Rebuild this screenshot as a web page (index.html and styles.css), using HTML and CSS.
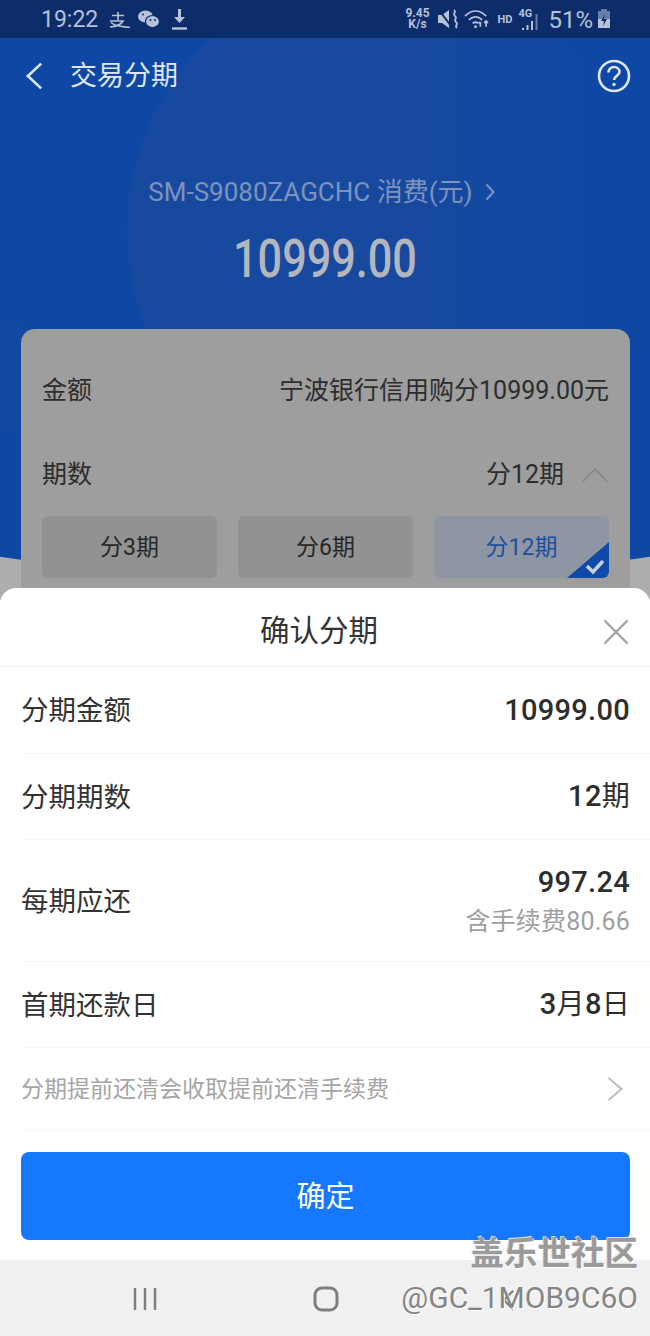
FILE: index.html
```html
<!DOCTYPE html>
<html lang="zh-CN">
<head>
<meta charset="utf-8">
<title>交易分期</title>
<link rel="stylesheet" href="styles.css">
</head>
<body>
<div class="page">
  <div class="behind">
    <div class="blue"><div class="disc"></div><div class="disc-small"></div></div>
    <div class="status">
      <div class="status-left">
        <span class="time">19:22</span>
        <svg class="i-ali" viewBox="0 0 23 18"><path d="M4 5.500h12M10 2v8M2 11h13C13 14.500 8 16.500 2 17M3 12.500C7 16.500 14 16.500 22 17.500"/></svg>
        <svg class="i-wx" viewBox="0 0 22 18"><ellipse cx="7.500" cy="6.500" rx="7.500" ry="6"/><ellipse class="wx2" cx="14.500" cy="11.500" rx="7" ry="6"/><circle class="eye" cx="12.500" cy="10" r="1"/><circle class="eye" cx="17" cy="10" r="1"/><circle class="eye" cx="5" cy="4.500" r="1"/></svg>
        <svg class="i-dl" viewBox="0 0 17 21"><path class="fill" d="M7 0h3v8h4l-5.500 6L3 8h4z"/><path d="M1 19.500h15"/></svg>
      </div>
      <div class="status-right">
        <span class="speed">9.45<br>K/s</span>
        <svg class="i-mute" viewBox="0 0 20 20"><path class="fill" d="M0 6h4l7-5v18l-7-5H0z"/><path class="cut" d="M1 1l12 16"/><path d="M16 1c3 2-2 4 1 6s-2 4 1 6-2 4 1 6"/></svg>
        <svg class="i-wifi" viewBox="0 0 26 20"><path d="M1 7c7-7 15-7 22 0M5 11c4.500-4 9.500-4 14 0M9 14.500c2-1.500 4-1.500 6 0"/><circle class="fill" cx="12" cy="18" r="1.500"/><path d="M17 13v5M15.500 14.500L17 13M23 18v-6M21 14l2-2 2 2"/></svg>
        <span class="hd">HD</span>
        <span class="net"><span class="net-label">4G</span>
          <svg class="i-sig" viewBox="0 0 18 19"><path d="M2 19v-2M6.500 19v-5M11 19v-9"/><path d="M15.500 19V3" class="dim"/></svg>
        </span>
        <span class="batt-text">51%</span>
        <svg class="i-batt" viewBox="0 0 14 20"><rect class="fill dim-fill" x="4" y="0" width="6" height="2"/><rect class="fill dim-fill" x="1" y="2" width="12" height="8"/><rect class="fill" x="1" y="10" width="12" height="9"/><path class="bolt" d="M8 5l-4 7h3l-1 5 4-7H7z"/></svg>
      </div>
    </div>
    <header class="appbar">
      <svg class="i-back" viewBox="0 0 20 30"><path d="M17 2L3 15l14 13"/></svg>
      <h1 class="appbar-title">交易分期</h1>
      <svg class="i-help" viewBox="0 0 34 34"><circle cx="17" cy="17" r="15"/><path d="M11.500 13.500c0-3.500 2.500-5.500 5.500-5.500s5.500 2 5.500 5c0 3.800-5.500 4-5.500 8"/><circle class="fill" cx="17" cy="25.500" r="1.700"/></svg>
    </header>
    <section class="hero">
      <div class="hero-sub"><span>SM-S9080ZAGCHC 消费(元)</span>
        <svg class="i-gt" viewBox="0 0 10 18"><path d="M1.500 1.500L8.500 9l-7 7.500"/></svg></div>
      <div class="hero-amount">10999.00</div>
    </section>
    <section class="card">
      <div class="card-row"><span>金额</span><span>宁波银行信用购分10999.00元</span></div>
      <div class="card-row"><span>期数</span>
        <span class="card-val"><span>分12期</span><svg class="i-up" viewBox="0 0 28 16"><path d="M1.500 15L14 2l12.500 13"/></svg></span></div>
      <div class="opts">
        <div class="opt">分3期</div>
        <div class="opt">分6期</div>
        <div class="opt opt-on">分12期<svg class="i-corner" viewBox="0 0 42 36"><path class="corner" d="M42 0v30a6 6 0 0 1-6 6H0z"/><path class="tick" d="M20 24l6 6 10-11"/></svg></div>
      </div>
    </section>
  </div>

  <section class="sheet">
    <div class="sheet-head">
      <h2 class="sheet-title">确认分期</h2>
      <svg class="i-x" viewBox="0 0 28 28"><path d="M1.500 1.500l25 25M26.500 1.500l-25 25"/></svg>
    </div>
    <div class="row"><span class="label">分期金额</span><b class="val">10999.00</b></div>
    <div class="row"><span class="label">分期期数</span><b class="val">12<span class="reg">期</span></b></div>
    <div class="row row-tall"><span class="label">每期应还</span>
      <div class="val-stack"><b class="val">997.24</b><span class="fee">含手续费80.66</span></div></div>
    <div class="row"><span class="label">首期还款日</span><b class="val">3<span class="reg">月</span>8<span class="reg">日</span></b></div>
    <div class="row row-note"><span class="label">分期提前还清会收取提前还清手续费</span>
      <svg class="i-chev" viewBox="0 0 18 28"><path d="M2 2l14 12L2 26"/></svg></div>
    <div class="action"><button class="confirm">确定</button></div>
  </section>

  <nav class="navbar">
    <svg class="i-recent" viewBox="0 0 24 24"><path d="M2 1v22M12 1v22M22 1v22"/></svg>
    <svg class="i-home" viewBox="0 0 26 26"><rect x="2" y="2" width="22" height="22" rx="7"/></svg>
    <svg class="i-nav-back" viewBox="0 0 14 24"><path d="M12 2L2 12l10 10"/></svg>
  </nav>
  <div class="mark"><div class="mark-a">盖乐世社区</div><div class="mark-b">@GC_1MOB9C6O</div></div>
</div>
</body>
</html>
```
FILE: styles.css
```css
* { box-sizing: border-box; margin: 0; padding: 0; }
html, body { width: 650px; height: 1336px; overflow: hidden; }
body { font-family: Roboto, "Noto Sans CJK SC", sans-serif; color: #2f2f2f; background: #fff; }
svg { display: block; fill: none; stroke: currentColor; flex: none; }
svg .fill { fill: currentColor; stroke: none; }

.page { position: relative; width: 650px; height: 1336px; display: flex; flex-direction: column; }

.behind { position: relative; height: 600px; flex: none; background: #adadad; overflow: hidden; }
.blue { position: absolute; left: -275px; top: 0; width: 1200px; height: 579px; border-radius: 0 0 50% 50% / 0 0 140px 140px; background: #0f47a5; overflow: hidden; }
.disc { position: absolute; left: 402px; top: -31px; width: 522px; height: 522px; border-radius: 50%; background: linear-gradient(90deg, #174a9f 55%, #0f47a5 92%); }
.disc-small { position: absolute; left: 205px; top: 315px; width: 120px; height: 120px; border-radius: 50%; background: #12489f; }

.status { position: relative; height: 38px; background: #0c2c6a; color: #b6c2d8; display: flex; justify-content: space-between; align-items: center; padding: 0 39px 0 41px; }
.status-left, .status-right { display: flex; align-items: center; }
.time { font-size: 23px; margin-right: 10px; line-height: 38px; padding-top: 2px; }
.i-ali { width: 23px; height: 18px; stroke-width: 1.700; margin-right: 7px; }
.i-wx { width: 22px; height: 18px; fill: currentColor; stroke: none; margin-right: 11px; }
.i-wx .wx2 { stroke: #0c2c6a; stroke-width: 1.200; }
.i-wx .eye { fill: #0c2c6a; }
.i-dl { width: 17px; height: 21px; stroke-width: 2.400; }
.speed { width: 24px; font-size: 12px; font-weight: 700; line-height: 11px; text-align: center; margin-right: 9px; white-space: nowrap; }
.i-mute { width: 20px; height: 20px; stroke-width: 1.800; margin-right: 6px; }
.i-mute .cut { stroke: #0c2c6a; stroke-width: 2; }
.i-wifi { width: 25px; height: 20px; stroke-width: 1.800; margin-right: 8px; }
.hd { width: 16px; font-size: 11px; font-weight: 700; margin-right: 5px; white-space: nowrap; }
.net { position: relative; display: flex; width: 21px; height: 22px; margin-right: 9px; }
.net-label { position: absolute; left: 0; top: 0; font-size: 11px; font-weight: 700; line-height: 11px; }
.i-sig { position: absolute; right: 0; bottom: 0; width: 18px; height: 19px; stroke-width: 2; }
.i-sig .dim { opacity: .55; }
.batt-text { font-size: 24px; margin-right: 4px; line-height: 38px; padding-top: 2px; }
.i-batt { width: 14px; height: 20px; }
.i-batt .dim-fill { opacity: .55; }
.i-batt .bolt { fill: #0c2c6a; stroke: none; }

.appbar { position: relative; height: 76px; display: flex; align-items: center; padding: 0 20px 0 25px; color: #dfe7f3; }
.i-back { width: 19px; height: 30px; stroke-width: 2.800; margin-right: 26px; }
.appbar-title { flex: 1; font-size: 27px; font-weight: 400; line-height: 36px; }
.i-help { width: 34px; height: 34px; stroke-width: 2.600; margin-right: -1px; }

.hero { position: relative; padding-top: 60px; height: 215px; text-align: center; color: #7d93bd; }
.hero-sub { display: flex; justify-content: center; align-items: center; gap: 12px; font-size: 26px; line-height: 36px; padding-right: 7px; }
.i-gt { width: 10px; height: 18px; stroke-width: 2; }
.hero-amount { margin-top: 20px; font-size: 53px; font-weight: 500; line-height: 58px; color: #b3b6bd; transform: scaleX(.815); }

.card { position: relative; margin: 0 20px 0 21px; height: 300px; padding: 30px 21px 0; background: #9e9e9e; border-radius: 14px; color: #2c2c2c; font-size: 25px; }
.card-row { height: 62px; display: flex; justify-content: space-between; align-items: center; line-height: 36px; padding-top: 2px; }
.card-row + .card-row { margin-top: 22px; }
.card-val { display: flex; align-items: center; gap: 17px; }
.i-up { width: 28px; height: 16px; stroke-width: 1.600; color: #868686; }
.opts { display: grid; grid-template-columns: repeat(3, 175px); justify-content: space-between; margin-top: 11px; }
.opt { position: relative; height: 62px; border-radius: 6px; background: #929292; display: flex; align-items: center; justify-content: center; font-size: 23px; color: #262626; padding-bottom: 4px; }
.opt-on { background: #8f96a3; color: #1c4f9f; overflow: hidden; }
.i-corner { position: absolute; right: 0; bottom: 0; width: 42px; height: 36px; stroke: none; }
.corner { fill: #0f4aa8; }
.tick { fill: none; stroke: #c6d0dd; stroke-width: 3.500; }

.sheet { position: relative; flex: none; margin-top: -12px; height: 672px; background: #fff; border-radius: 16px 16px 0 0; padding: 0 0 0 21px; }
.sheet-head { position: relative; height: 79px; margin-left: -21px; display: flex; align-items: center; padding: 7px 0 0 260px; border-bottom: 1px solid #f1f1f1; }
.sheet-title { font-size: 29.500px; font-weight: 400; line-height: 40px; color: #333; }
.i-x { position: absolute; left: 603px; top: 31px; width: 26px; height: 26px; stroke-width: 2.400; color: #a5a5a5; }
.row { height: 87px; display: flex; justify-content: space-between; align-items: center; font-size: 27.500px; border-bottom: 1px solid #f6f6f6; color: #333; padding-right: 20px; }
.row + .row { height: 86px; }
.row .label { line-height: 36px; padding-top: 2px; }
.row-tall { height: 122px !important; }
.val { font-size: 29px; font-weight: 500; line-height: 36px; color: #2e2e2e; letter-spacing: .3px; }
.reg { font-weight: 400; font-size: 28px; }
.val-stack { display: flex; flex-direction: column; align-items: flex-end; gap: 4px; padding-top: 2px; }
.fee { font-size: 25px; line-height: 36px; color: #a0a0a0; letter-spacing: .2px; }
.row-note { height: 83px !important; font-size: 23px; color: #a5a5a5; }
.i-chev { width: 18px; height: 26px; stroke-width: 2; color: #b8b8b8; margin-right: 6px; }
.action { padding-top: 21px; }
.confirm { display: block; width: 609px; height: 88px; border: 0; border-radius: 8px; background: #1677ff; color: #fff; font: 400 29px Roboto, "Noto Sans CJK SC", sans-serif; padding-bottom: 4px; }

.navbar { background: #f1f1f1; color: #7f7f7f; position: absolute; left: 0; right: 0; top: 1260px; height: 76px; }
.i-recent { position: absolute; left: 133px; top: 27px; width: 24px; height: 24px; stroke-width: 2.500; }
.i-home { position: absolute; left: 313px; top: 26px; width: 26px; height: 26px; stroke-width: 3; }
.i-nav-back { position: absolute; left: 502px; top: 28px; width: 13px; height: 24px; stroke-width: 2.500; }

.mark { position: absolute; right: 12px; top: 1233px; text-align: right; color: #8a8a8a; }
.mark-a { font-size: 33.500px; font-weight: 700; line-height: 42px; color: #9a9a9a; text-shadow: 1px 1px 0 #fff, -1px -1px 0 #e0e0e0; }
.mark-b { margin-top: 5px; font-size: 30px; line-height: 36px; color: #858585; text-shadow: 1px 1px 0 #fff; }
```
